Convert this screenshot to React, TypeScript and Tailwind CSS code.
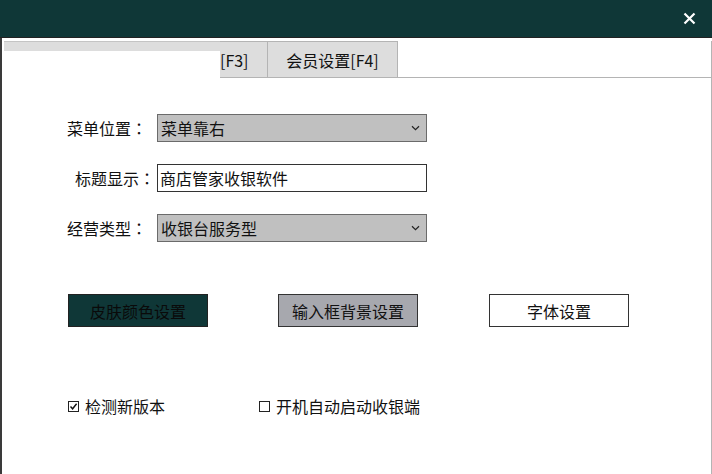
import React from 'react';

const font = { fontFamily: '"Noto Sans CJK SC", "Noto Sans", sans-serif' };
// centred full-width colon, as in the original UI font
const colonFont = { fontFamily: '"Noto Sans CJK JP", "Noto Sans CJK TC", sans-serif' };

const Chevron = () => (
  <svg width="9" height="6" viewBox="0 0 9 6" className="shrink-0">
    <path d="M1 1.2 L4.5 4.6 L8 1.2" fill="none" stroke="#222" strokeWidth="1.2" />
  </svg>
);

const SelectBox: React.FC<{ value: string }> = ({ value }) => (
  <div className="flex h-[28px] w-[270px] items-center justify-between border border-[#6b6b6b] bg-[#c0c0c0] pl-[3px] pr-[6px] text-[16px] text-[#111]">
    <span>{value}</span>
    <Chevron />
  </div>
);

const Label: React.FC<{ text: string; pad: string }> = ({ text, pad }) => (
  <span className={`w-[155px] text-[16px] ${pad}`}>
    {text}
    <span style={colonFont}>：</span>
  </span>
);

const App: React.FC = () => {
  return (
    <div className="flex h-[474px] w-[712px] flex-col overflow-hidden bg-white text-[#111]" style={font}>
      {/* title bar */}
      <div className="flex h-[37px] shrink-0 items-center justify-end bg-[#0f3737] pr-[16px]">
        <svg width="13" height="13" viewBox="0 0 13 13">
          <path d="M1.5 1.5 L11.5 11.5 M11.5 1.5 L1.5 11.5" stroke="#fff" strokeWidth="2.2" />
        </svg>
      </div>
      <div className="h-[1px] shrink-0 bg-[#222]" />

      <div className="flex flex-1 flex-col border-l-2 border-[#3a3a3a]">
        {/* tab strip */}
        <div className="mt-[3px] flex h-[37px] shrink-0 pl-[2px]">
          <div className="flex w-[216px] flex-col border-t border-[#c4c4c4]">
            <div className="h-[9px] bg-[#dddddd]" />
            <div className="flex-1 bg-white" />
          </div>
          <div className="flex w-[48px] items-center border-b border-r border-t border-[#b4b4b4] bg-[#dddddd] text-[16px]">
            <span>[F3]</span>
          </div>
          <div className="flex w-[130px] items-center justify-center border-b border-r border-t border-[#b4b4b4] bg-[#dddddd] text-[16px]">
            会员设置[F4]
          </div>
          <div className="flex-1 border-b border-r border-[#b4b4b4]" />
        </div>

        {/* content */}
        <div className="flex flex-1 flex-col border-r border-[#b4b4b4]">
          <div className="flex flex-col gap-[22px] pt-[36px]">
            <div className="flex items-center">
              <Label text="菜单位置" pad="pl-[65px]" />
              <SelectBox value="菜单靠右" />
            </div>
            <div className="flex items-center">
              <Label text="标题显示" pad="pl-[73px]" />
              <div className="flex h-[28px] w-[270px] items-center border border-[#333] bg-white pl-[2px] text-[16px]">
                商店管家收银软件
              </div>
            </div>
            <div className="flex items-center">
              <Label text="经营类型" pad="pl-[65px]" />
              <SelectBox value="收银台服务型" />
            </div>
          </div>

          <div className="mt-[52px] flex gap-[70px] pl-[66px]">
            <button className="h-[33px] w-[140px] border border-[#222] bg-[#0f3737] text-[16px] text-[#0a0a0a]">
              皮肤颜色设置
            </button>
            <button className="h-[33px] w-[140px] border border-[#333] bg-[#a7a8ae] text-[16px] text-[#111]">
              输入框背景设置
            </button>
            <button className="ml-[1px] h-[33px] w-[140px] border border-[#333] bg-white text-[16px] text-[#111]">
              字体设置
            </button>
          </div>

          <div className="mt-[67px] flex items-center pl-[66px] text-[16px]">
            <div className="flex w-[191px] items-center">
              <span className="mr-[6px] flex h-[11px] w-[11px] items-center justify-center border border-[#222]">
                <svg width="9" height="9" viewBox="0 0 9 9">
                  <path d="M1.5 4.5 L3.6 6.8 L7.6 1.8" fill="none" stroke="#111" strokeWidth="1.4" />
                </svg>
              </span>
              检测新版本
            </div>
            <div className="flex items-center">
              <span className="mr-[6px] h-[11px] w-[11px] border border-[#222]" />
              开机自动启动收银端
            </div>
          </div>
        </div>
      </div>
    </div>
  );
};

export default App;
